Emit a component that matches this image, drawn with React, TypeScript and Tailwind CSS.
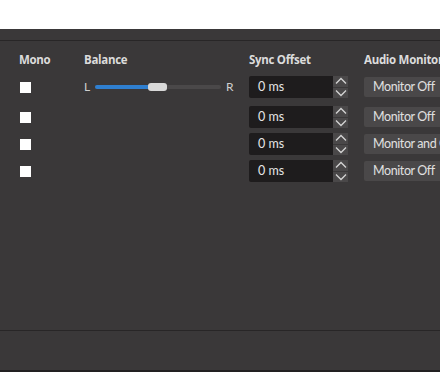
import { ReactNode } from "react";

const rows = [
  { top: "mt-[35px]", monitor: "Monitor Off", balance: true },
  { top: "mt-[8px]", monitor: "Monitor Off", balance: false },
  { top: "mt-[5px]", monitor: "Monitor and Output", balance: false },
  { top: "mt-[5px]", monitor: "Monitor Off", balance: false },
];

const body = { fontFamily: 'Lato, "Noto Sans", sans-serif' };

function Spin() {
  return (
    <div className="flex h-[22px] w-[100px]">
      <div
        className="flex w-[84px] items-center rounded-l-[2px] bg-[#1e1c1d] pl-[9px] text-[12.5px] text-[#e6e6e6]"
        style={body}
      >
        0&nbsp;ms
      </div>
      <div className="flex w-[15px] flex-col bg-[#4a4849]">
        <div className="flex flex-1 items-center justify-center border-b border-[#3a3839]">
          <svg width="12" height="8" viewBox="0 0 12 8">
            <path d="M1 6.5 L6 1.5 L11 6.5" stroke="#d4d4d4" strokeWidth="1.3" fill="none" />
          </svg>
        </div>
        <div className="flex flex-1 items-center justify-center">
          <svg width="12" height="8" viewBox="0 0 12 8">
            <path d="M1 1.5 L6 6.5 L11 1.5" stroke="#d4d4d4" strokeWidth="1.3" fill="none" />
          </svg>
        </div>
      </div>
    </div>
  );
}

function Cell({ w, children }: { w: string; children?: ReactNode }) {
  return <div className={`${w} flex shrink-0 items-center`}>{children}</div>;
}

export default function App() {
  return (
    <div
      className="flex h-[372px] w-[440px] flex-col overflow-hidden bg-white"
      style={{ fontFamily: '"Open Sans", "Noto Sans", sans-serif' }}
    >
      <div className="mt-[29px] flex flex-1 flex-col bg-[#3a3839]">
        <div className="mt-[11px] h-[1px] bg-[#282627]" />

        <div className="relative flex-1">
          <div className="absolute left-0 top-[10px] flex text-[11.5px] font-bold tracking-[-0.3px] text-[#dcdcdc]">
            <div className="w-[84px] pl-[19px]">Mono</div>
            <div className="w-[165px]">Balance</div>
            <div className="w-[115px]">Sync Offset</div>
            <div className="whitespace-nowrap">Audio Monitoring</div>
          </div>

          {rows.map((r, i) => (
            <div key={i} className={`${r.top} flex h-[22px] items-center`}>
              <Cell w="w-[84px] pl-[20px]">
                <div className="h-[11px] w-[11px] bg-white" />
              </Cell>
              <Cell w="w-[165px]">
                {r.balance && (
                  <div className="flex items-center text-[12px] text-[#cfcfcf]" style={body}>
                    <span className="w-[11px]">L</span>
                    <div className="relative flex h-[4px] w-[126px] items-center rounded-full bg-[#4a4849]">
                      <div className="h-[4px] w-[54px] rounded-l-full bg-[#2f7fd0]" />
                      <div className="absolute left-[53px] h-[8px] w-[19px] rounded-[3px] bg-[#d8d8d8]" />
                    </div>
                    <span className="ml-[5px]">R</span>
                  </div>
                )}
              </Cell>
              <Cell w="w-[115px]">
                <Spin />
              </Cell>
              <Cell w="w-[120px]">
                <div
                  className="flex h-[20px] w-[120px] items-center whitespace-nowrap rounded-[2px] bg-[#4a4849] pl-[9px] text-[12.5px] tracking-[-0.4px] text-[#e0e0e0]"
                  style={body}
                >
                  {r.monitor}
                </div>
              </Cell>
            </div>
          ))}
        </div>

        <div className="h-[1px] bg-[#282627]" />
        <div className="h-[39px]" />
        <div className="h-[2px] bg-[#222021]" />
      </div>
    </div>
  );
}
